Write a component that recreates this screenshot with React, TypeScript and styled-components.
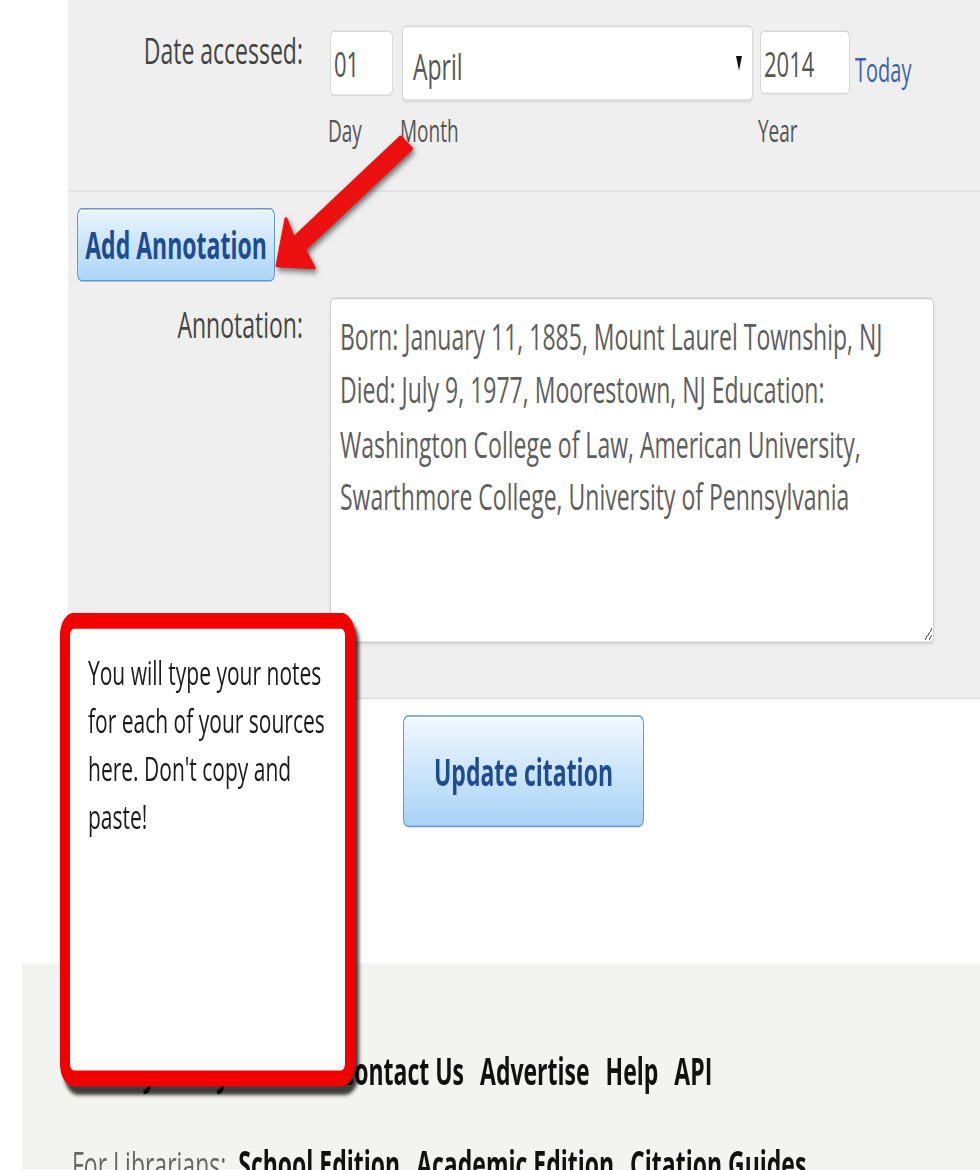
import React from 'react';
import styled, { createGlobalStyle } from 'styled-components';

const GlobalStyle = createGlobalStyle`
  html, body {
    margin: 0;
    padding: 0;
    background: #fff;
  }
  body {
    min-height: 1170px;
    font-family: "Open Sans", "Liberation Sans", Arial, sans-serif;
  }
  * {
    box-sizing: border-box;
  }
`;

const footerLinks = ['Privacy Policy', 'Mobile', 'Contact Us', 'Advertise', 'Help', 'API'];
const librarianLinks = ['School Edition', 'Academic Edition', 'Citation Guides'];

const annotation =
    'Born: January 11, 1885, Mount Laurel Township, NJ Died: July 9, 1977, Moorestown, NJ Education: Washington College of Law, American University, Swarthmore College, University of Pennsylvania';

const App: React.FC = () => {
    return (
        <>
            <GlobalStyle />
            <Page>
                <Panel>
                    <DateSection>
                        <FieldRow>
                            <FieldLabel>Date accessed:</FieldLabel>
                            <Controls>
                                <Part $w={63} $gap={9}>
                                    <PartBox>
                                        <TextInput $h={41} defaultValue="01" />
                                    </PartBox>
                                    <Caption>Day</Caption>
                                </Part>
                                <Part $w={351} $gap={7}>
                                    <PartBox>
                                        <SelectBox>
                                            <SelectValue>April</SelectValue>
                                            <Caret />
                                        </SelectBox>
                                    </PartBox>
                                    <Caption>Month</Caption>
                                </Part>
                                <Part $w={90} $gap={5}>
                                    <PartBox>
                                        <TextInput $h={40} defaultValue="2014" />
                                    </PartBox>
                                    <Caption>Year</Caption>
                                </Part>
                                <TodayLink href="#">Today</TodayLink>
                            </Controls>
                        </FieldRow>
                    </DateSection>
                    <AnnotSection>
                        <AddButton>Add Annotation</AddButton>
                        <FieldRow $top={10}>
                            <FieldLabel>Annotation:</FieldLabel>
                            <NoteArea defaultValue={annotation} />
                        </FieldRow>
                    </AnnotSection>
                </Panel>
                <Actions>
                    <UpdateButton>Update citation</UpdateButton>
                </Actions>
                <Footer>
                    <FooterLine>
                        {footerLinks.map((l) => (
                            <FooterLink key={l}>{l}</FooterLink>
                        ))}
                    </FooterLine>
                    <FooterLine $top={26}>
                        <FooterNote>For Librarians:</FooterNote>
                        {librarianLinks.map((l) => (
                            <FooterLink key={l}>{l}</FooterLink>
                        ))}
                    </FooterLine>
                </Footer>

                <Callout>
                    You will type your notes for each of your sources here. Don't copy and paste!
                </Callout>
                <Arrow viewBox="255 125 170 160" preserveAspectRatio="none">
                    <polygon
                        points="277,266 286,219 293.5,238.2 400.5,137.2 411.5,148.8 304.5,249.8 314,268"
                        fill="#ec1010"
                        stroke="#ec1010"
                        strokeWidth="3"
                        strokeLinejoin="round"
                    />
                </Arrow>
            </Page>
        </>
    );
};

export default App;

// the capture is stretched vertically, so the page is laid out short and scaled up
const Page = styled.div`
    position: relative;
    width: 980px;
    height: 731px;
    overflow: hidden;
    transform: scaleY(1.6);
    transform-origin: 0 0;
`;

const Panel = styled.div`
    margin-left: 68px;
    background: #efefef;
    border-bottom: 1px solid #dfdfdf;
`;

const DateSection = styled.div`
    height: 120px;
    padding-top: 15px;
    border-bottom: 1px solid #e0e0e0;
`;

const FieldRow = styled.div<{ $top?: number }>`
    display: flex;
    align-items: flex-start;
    margin-top: ${(p) => p.$top || 0}px;
`;

const FieldLabel = styled.label`
    width: 235px;
    margin-right: 27px;
    text-align: right;
    font-size: 23px;
    line-height: 32px;
    color: #444;
`;

const Controls = styled.div`
    display: flex;
    align-items: flex-start;
`;

const Part = styled.div<{ $w: number; $gap: number }>`
    display: flex;
    flex-direction: column;
    width: ${(p) => p.$w}px;
    margin-right: ${(p) => p.$gap}px;
`;

const PartBox = styled.div`
    height: 48px;
    display: flex;
    align-items: center;
`;

const Caption = styled.span`
    margin: 6px 0 0 -2px;
    font-size: 19px;
    line-height: 26px;
    color: #555;
`;

const TextInput = styled.input<{ $h: number }>`
    width: 100%;
    height: ${(p) => p.$h}px;
    padding: 0 3px;
    border: 1px solid #d8d8d8;
    border-radius: 4px;
    background: #fff;
    font-family: inherit;
    font-size: 22px;
    color: #555;
    outline: none;
`;

const SelectBox = styled.div`
    width: 100%;
    height: 47px;
    display: flex;
    align-items: center;
    justify-content: space-between;
    padding: 0 10px;
    border: 1px solid #d8d8d8;
    border-radius: 4px;
    background: #fff;
    box-shadow: 0 1px 1px rgba(0, 0, 0, 0.06);
`;

const SelectValue = styled.span`
    padding-top: 4px;
    font-size: 23px;
    color: #555;
`;

const Caret = styled.span`
    width: 0;
    height: 0;
    border-left: 3.5px solid transparent;
    border-right: 3.5px solid transparent;
    border-top: 9px solid #111;
`;

const TodayLink = styled.a`
    margin-top: 15px;
    font-size: 20px;
    line-height: 27px;
    color: #3d64ae;
    text-decoration: none;
`;

const AnnotSection = styled.div`
    padding: 10px 0 34px;
`;

const Button = styled.button`
    display: block;
    padding: 0;
    border: 1px solid #5f9ad3;
    border-radius: 5px;
    background: linear-gradient(#f1f8fe, #a8d2f7);
    box-shadow: inset 0 1px 0 #fff;
    font-family: inherit;
    font-weight: 700;
    font-size: 23px;
    color: #1e4c8e;
    cursor: pointer;
`;

const AddButton = styled(Button)`
    width: 198px;
    height: 46px;
    margin-left: 9px;
    background: linear-gradient(#e9f4fd, #acd5f8);
`;

const NoteArea = styled.textarea`
    width: 604px;
    height: 216px;
    padding: 7px 9px;
    border: 1px solid #d0d0d0;
    border-radius: 4px;
    background: #fff;
    box-shadow: 0 1px 2px rgba(0, 0, 0, 0.08);
    font-family: inherit;
    font-size: 23px;
    line-height: 33.4px;
    color: #5e5e5e;
    outline: none;
`;

const Actions = styled.div`
    height: 165px;
    padding: 10px 0 0 403px;
`;

const UpdateButton = styled(Button)`
    width: 241px;
    height: 70px;
`;

const Footer = styled.div`
    height: 129px;
    margin-left: 22px;
    padding: 51px 0 0 50px;
    background: #f3f3ef;
`;

const FooterLine = styled.div<{ $top?: number }>`
    display: flex;
    gap: 16px;
    margin-top: ${(p) => p.$top || 0}px;
    font-size: 23px;
    line-height: 32px;
    white-space: nowrap;
`;

const FooterLink = styled.a`
    font-weight: 700;
    color: #111;
`;

const FooterNote = styled.span`
    margin-right: -4px;
    color: #666;
`;

const Callout = styled.div`
    position: absolute;
    left: 60px;
    top: 383px;
    width: 295px;
    height: 296px;
    padding: 12px 10px 0 18px;
    border: 10px solid #f20000;
    border-radius: 14px;
    background: #fff;
    box-shadow: 4px 5px 3px rgba(0, 0, 0, 0.75);
    font-size: 21px;
    line-height: 30px;
    color: #1b1b1b;
`;

const Arrow = styled.svg`
    position: absolute;
    left: 255px;
    top: 78px;
    width: 170px;
    height: 100px;
    overflow: visible;
    filter: drop-shadow(2px 2px 2px rgba(0, 0, 0, 0.55));
`;
